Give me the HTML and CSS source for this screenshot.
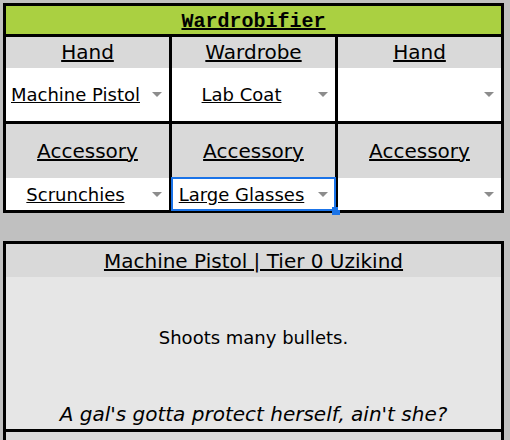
FILE: index.html
```html
<!DOCTYPE html>
<html lang="en">
<head>
<meta charset="utf-8">
<title>Wardrobifier</title>
<link rel="stylesheet" href="styles.css">
</head>
<body>
<div class="wardrobe">
  <div class="wardrobe-title"><span class="u">Wardrobifier</span></div>
  <div class="slots">
    <div class="slot slot-top">
      <div class="slot-label"><span class="u">Hand</span></div>
      <div class="dropdown"><span class="dropdown-value"><span class="u">Machine Pistol</span></span><span class="caret"><svg width="10" height="5" viewBox="0 0 10 5"><polygon points="0,0 10,0 5,5" fill="#8c8c8c"/></svg></span></div>
    </div>
    <div class="slot slot-top">
      <div class="slot-label"><span class="u">Wardrobe</span></div>
      <div class="dropdown"><span class="dropdown-value"><span class="u">Lab Coat</span></span><span class="caret"><svg width="10" height="5" viewBox="0 0 10 5"><polygon points="0,0 10,0 5,5" fill="#8c8c8c"/></svg></span></div>
    </div>
    <div class="slot slot-top">
      <div class="slot-label"><span class="u">Hand</span></div>
      <div class="dropdown"><span class="dropdown-value"></span><span class="caret"><svg width="10" height="5" viewBox="0 0 10 5"><polygon points="0,0 10,0 5,5" fill="#8c8c8c"/></svg></span></div>
    </div>
    <div class="slot slot-bottom">
      <div class="slot-label"><span class="u">Accessory</span></div>
      <div class="dropdown"><span class="dropdown-value"><span class="u">Scrunchies</span></span><span class="caret"><svg width="10" height="5" viewBox="0 0 10 5"><polygon points="0,0 10,0 5,5" fill="#8c8c8c"/></svg></span></div>
    </div>
    <div class="slot slot-bottom">
      <div class="slot-label"><span class="u">Accessory</span></div>
      <div class="dropdown is-focused"><span class="dropdown-value"><span class="u">Large Glasses</span></span><span class="caret"><svg width="10" height="5" viewBox="0 0 10 5"><polygon points="0,0 10,0 5,5" fill="#8c8c8c"/></svg></span></div>
    </div>
    <div class="slot slot-bottom">
      <div class="slot-label"><span class="u">Accessory</span></div>
      <div class="dropdown"><span class="dropdown-value"></span><span class="caret"><svg width="10" height="5" viewBox="0 0 10 5"><polygon points="0,0 10,0 5,5" fill="#8c8c8c"/></svg></span></div>
    </div>
  </div>
</div>

<div class="card">
  <div class="card-header"><span class="u">Machine Pistol | Tier 0 Uzikind</span></div>
  <div class="card-body">
    <p class="card-desc">Shoots many bullets.</p>
    <p class="card-quote">A gal's gotta protect herself, ain't she?</p>
  </div>
  <div class="card-footer"></div>
</div>
</body>
</html>
```

FILE: styles.css
```css
* { box-sizing: border-box; }

html, body {
  margin: 0;
  background: #c0c0c0;
}

body {
  padding: 3px 3px 0;
  font-family: "DejaVu Sans", Verdana, sans-serif;
  color: #000;
}

.u { text-decoration: underline; }

.wardrobe {
  width: 501px;
  border: 3px solid #000;
  background: #000;
}

.wardrobe-title {
  height: 31px;
  padding-top: 3px;
  line-height: 25px;
  background: #aad041;
  text-align: center;
  font-family: "Liberation Mono", "Courier New", monospace;
  font-weight: bold;
  font-size: 20px;
  border-bottom: 3px solid #000;
}

.slots {
  display: grid;
  grid-template-columns: 163px 163px 163px;
  gap: 3px;
  background: #000;
}

.slot {
  display: flex;
  flex-direction: column;
}

.slot-label {
  display: flex;
  align-items: center;
  justify-content: center;
  background: #d9d9d9;
  font-size: 20px;
}

.slot-top .slot-label { height: 31px; padding-bottom: 2px; }
.slot-top .dropdown { height: 53px; }
.slot-bottom .slot-label { height: 54px; }
.slot-bottom .dropdown { height: 32px; }

.dropdown {
  position: relative;
  display: flex;
  align-items: center;
  background: #fff;
  font-size: 18px;
}

.dropdown-value {
  flex: 1;
  text-align: center;
  white-space: nowrap;
}

.caret {
  flex: none;
  width: 24px;
  display: flex;
  justify-content: center;
  align-items: center;
}

.caret svg { display: block; }

.dropdown.is-focused {
  outline: 2px solid #1a73e8;
  outline-offset: -1px;
}

.dropdown.is-focused::after {
  content: "";
  position: absolute;
  right: -5px;
  bottom: -5px;
  width: 8px;
  height: 8px;
  background: #1a73e8;
}

.card {
  width: 501px;
  margin-top: 28px;
  border: 3px solid #000;
  border-bottom: 0;
}

.card-header {
  height: 33px;
  display: flex;
  align-items: center;
  justify-content: center;
  background: #d9d9d9;
  font-size: 20px;
}

.card-body {
  height: 152px;
  background: #e6e6e6;
  text-align: center;
  padding-top: 50px;
}

.card-desc {
  margin: 0;
  font-size: 18px;
  line-height: 22px;
}

.card-quote {
  margin: 53px 0 0;
  font-size: 20px;
  line-height: 24px;
  font-style: italic;
}

.card-footer {
  height: 11px;
  border-top: 3px solid #000;
  background: #d9d9d9;
}
```
